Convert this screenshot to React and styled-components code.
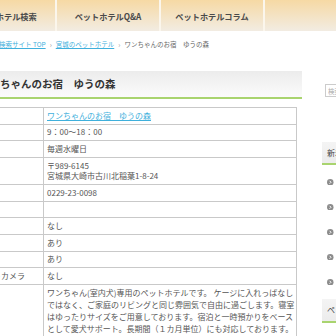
import React from 'react';
import styled, { createGlobalStyle } from 'styled-components';

const Global = createGlobalStyle`
  html, body { margin: 0; padding: 0; background: #fff; overflow: hidden; }
  body { font-family: "Noto Sans CJK JP", "Noto Sans", sans-serif; color: #555; }
`;

const Page = styled.div`
  width: 460px;
  margin-left: -48px;
`;

const Header = styled.header`
  height: 31px;
  background: linear-gradient(#f6d9a4, #f2ece2);
`;

const NavList = styled.ul`
  display: flex;
  height: 100%;
  margin: 0;
  padding: 0 0 0 1px;
  list-style: none;
`;

const NavItem = styled.li`
  width: 102px;
  border-right: 2px solid #fbf6ec;
  display: flex;
  align-items: center;
  justify-content: center;
  font-size: 8.2px;
  font-weight: 700;
  color: #4a4a4a;
  white-space: nowrap;
`;

const Content = styled.div`
  display: flex;
  gap: 20px;
  padding-left: 8px;
`;

const Main = styled.main`
  width: 342px;
  flex: none;
`;

const Breadcrumb = styled.nav`
  display: flex;
  align-items: center;
  gap: 4px;
  padding-top: 8px;
  font-size: 6.5px;
  line-height: 10px;
  color: #666;
  white-space: nowrap;
`;

const CrumbLink = styled.a`
  color: #3fb0dc;
  text-decoration: underline;
`;

const Sep = styled.span`
  color: #999;
  font-size: 7px;
`;

const Title = styled.h1`
  margin: 22px 0 0;
  height: 26px;
  line-height: 26px;
  padding-left: 19px;
  font-size: 10.5px;
  font-weight: 700;
  color: #333;
  background: linear-gradient(#ececec, #fbfbfb);
  border-bottom: 2px solid #a9d46f;
  white-space: nowrap;
`;

const Table = styled.table`
  margin: 8px 5px 0;
  width: 332px;
  table-layout: fixed;
  border-collapse: collapse;
  font-size: 8px;
  line-height: 10.3px;
  color: #555;
`;

const Th = styled.th`
  width: 66px;
  padding: 2.7px 0 2.7px 11px;
  border: 1px solid #c9c9c9;
  text-align: left;
  font-weight: 400;
  white-space: nowrap;
  overflow: hidden;
`;

const Td = styled.td`
  padding: ${p => (p.$long ? '1.5px 2px 2px 3px' : '2.7px 2px 2.7px 3px')};
  line-height: ${p => (p.$long ? '12px' : 'inherit')};
  border: 1px solid #c9c9c9;
  vertical-align: ${p => (p.$long ? 'top' : 'middle')};
  white-space: nowrap;
  overflow: hidden;
`;

const ValueLink = styled.a`
  color: #3fb0dc;
  text-decoration: underline;
`;

const Side = styled.aside`
  width: 180px;
  flex: none;
`;

const Search = styled.input`
  display: block;
  box-sizing: border-box;
  margin: 53px 0 0 3px;
  width: 150px;
  height: 13px;
  padding: 0 2px;
  border: 1px solid #ccc;
  font-family: "Noto Sans CJK JP", sans-serif;
  font-size: 6.5px;
  color: #999;
  &::placeholder { color: #aaa; }
`;

const SideHeading = styled.h2`
  margin: ${p => p.$top}px 0 0;
  height: 21.6px;
  line-height: 21.6px;
  padding-left: 5px;
  font-size: 8px;
  font-weight: 400;
  color: #444;
  background: linear-gradient(#f4f4f4, #ececec);
  border-bottom: 2px solid #a9d46f;
  white-space: nowrap;
`;

const SideList = styled.ul`
  margin: 0;
  padding: 4px 0 0;
  list-style: none;
`;

const SideItem = styled.li`
  height: 25px;
  display: flex;
  align-items: center;
  gap: 4px;
  padding-left: 5px;
  font-size: 8px;
  color: #555;
  white-space: nowrap;
`;

const Arrow = () => (
  <svg width="6.5" height="6.5" viewBox="0 0 10 10" style={{ flex: 'none' }}>
    <circle cx="5" cy="5" r="5" fill="#8c8c8c" />
    <path d="M4 2.8 L6.2 5 L4 7.2" stroke="#fff" strokeWidth="1.5" fill="none" />
  </svg>
);

const rows = [
  ['名称', <ValueLink href="#">ワンちゃんのお宿　ゆうの森</ValueLink>],
  ['時間', '9：00〜18：00'],
  ['休日', '毎週水曜日'],
  ['住所', <>〒989-6145<br />宮城県大崎市古川北稲葉1-8-24</>],
  ['TEL', '0229-23-0098'],
  ['HP', '\u00a0'],
  ['送迎', 'なし'],
  ['散歩', 'あり'],
  ['駐車', 'あり'],
  ['ペットカメラ', 'なし'],
];

const description = [
  'ワンちゃん(室内犬)専用のペットホテルです。 ケージに入れっぱなし',
  'ではなく、ご家庭のリビングと同じ雰囲気で自由に過ごします。寝室',
  'はゆったりサイズをご用意しております。宿泊と一時預かりをベース',
  'として愛犬サポート。長期間（１カ月単位）にも対応しております。',
  '・シャンプー・グルーミング有り　・・・大切な家族の一員ですの',
  'で、安心してお預けください。',
];

const news = ['ワンちゃんのお宿 ゆうの森', 'ペットホテル杜の家', 'ドッグハウス仙台', 'ペットホテル青葉', 'わんにゃんホテル'];

export default function App() {
  return (
    <>
      <Global />
      <Page>
        <Header>
          <NavList>
            <NavItem>ペットホテル検索</NavItem>
            <NavItem>ペットホテルQ&amp;A</NavItem>
            <NavItem>ペットホテルコラム</NavItem>
          </NavList>
        </Header>
        <Content>
          <Main>
            <Breadcrumb>
              <CrumbLink href="#">ペットホテル検索サイト TOP</CrumbLink>
              <Sep>›</Sep>
              <CrumbLink href="#">宮城のペットホテル</CrumbLink>
              <Sep>›</Sep>
              <span>ワンちゃんのお宿　ゆうの森</span>
            </Breadcrumb>
            <Title>ワンちゃんのお宿　ゆうの森</Title>
            <Table>
              <tbody>
                {rows.map(([k, v], i) => (
                  <tr key={i}>
                    <Th>{k}</Th>
                    <Td>{v}</Td>
                  </tr>
                ))}
                <tr>
                  <Th>紹介</Th>
                  <Td $long>
                    {description.map((line, i) => (
                      <React.Fragment key={i}>{line}{i < description.length - 1 && <br />}</React.Fragment>
                    ))}
                  </Td>
                </tr>
              </tbody>
            </Table>
          </Main>
          <Side>
            <Search placeholder="検索" />
            <SideHeading $top={44.7}>新着ペットホテル</SideHeading>
            <SideList>
              {news.map((n) => (
                <SideItem key={n}><Arrow />{n}</SideItem>
              ))}
            </SideList>
            <SideHeading $top={5}>ペットホテルコラム</SideHeading>
          </Side>
        </Content>
      </Page>
    </>
  );
}
